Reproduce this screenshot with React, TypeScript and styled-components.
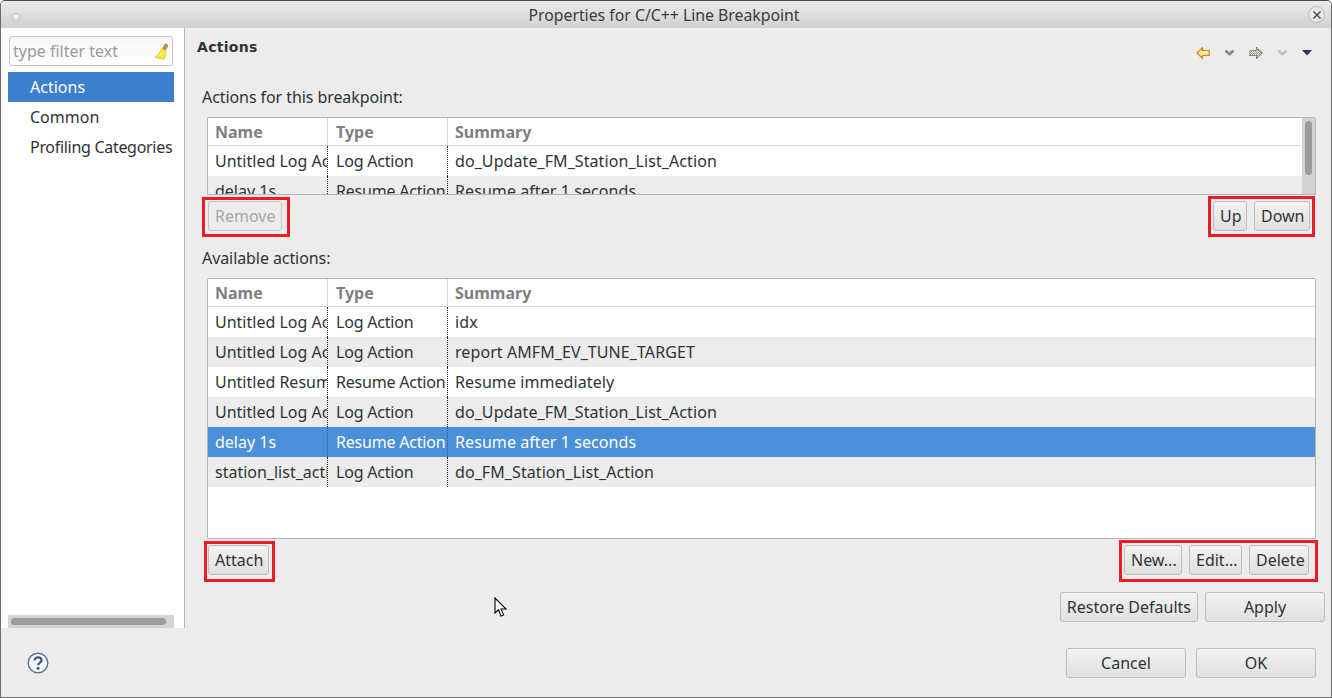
import { createGlobalStyle } from "styled-components";
import styled from "styled-components";

type Action = { name: string; type: string; summary: string; selected?: boolean };

const attached: Action[] = [
  { name: "Untitled Log Action", type: "Log Action", summary: "do_Update_FM_Station_List_Action" },
  { name: "delay 1s", type: "Resume Action", summary: "Resume after 1 seconds" },
];

const available: Action[] = [
  { name: "Untitled Log Action", type: "Log Action", summary: "idx" },
  { name: "Untitled Log Action", type: "Log Action", summary: "report AMFM_EV_TUNE_TARGET" },
  { name: "Untitled Resume Action", type: "Resume Action", summary: "Resume immediately" },
  { name: "Untitled Log Action", type: "Log Action", summary: "do_Update_FM_Station_List_Action" },
  { name: "delay 1s", type: "Resume Action", summary: "Resume after 1 seconds", selected: true },
  { name: "station_list_action", type: "Log Action", summary: "do_FM_Station_List_Action" },
];

function ActionTable({ rows, height, scroll }: { rows: Action[]; height: number; scroll?: boolean }) {
  return (
    <TableBox $height={height}>
      <TableMain>
        <HeadRow>
          <HeadCell $w={120}>Name</HeadCell>
          <HeadCell $w={120} $pad={8}>Type</HeadCell>
          <HeadCell>Summary</HeadCell>
        </HeadRow>
        {rows.map((r, i) => (
          <Row key={i} $odd={i % 2 === 1} $selected={r.selected}>
            <Cell $w={120} $dots={!r.selected}>{r.name}</Cell>
            <Cell $w={120} $pad={8} $dots={!r.selected} $spacing={-0.2}>{r.type}</Cell>
            <Cell $spacing={0.08}>{r.summary}</Cell>
          </Row>
        ))}
      </TableMain>
      {scroll && (
        <ScrollTrack>
          <ScrollThumb />
        </ScrollTrack>
      )}
    </TableBox>
  );
}

export default function App() {
  return (
    <>
      <GlobalStyle />
      <Window>
        <TitleBar>
          <WindowDot />
          <Title>Properties for C/C++ Line Breakpoint</Title>
          <CloseButton>
            <svg width="10" height="10" viewBox="0 0 10 10">
              <path d="M1.5 1.5L8.5 8.5M8.5 1.5L1.5 8.5" stroke="#444" strokeWidth="1.4" />
            </svg>
          </CloseButton>
        </TitleBar>

        <Body>
          <Sidebar>
            <FilterBox>
              <FilterInput>
                <span>type filter text</span>
                <svg width="15" height="17" viewBox="0 0 15 17">
                  <path d="M11.2 0.8L14 2.4L11.2 7.4L8.6 6Z" fill="#c29a4e" stroke="#8f6a24" strokeWidth="0.7" />
                  <path d="M7.6 5.2L11.8 7.6C12.4 10.6 11.6 13.8 10 16.4L8.4 15.6L7.4 16.4L5.8 15.2L4.8 15.8L3.4 14.6L1 14.4C4 12.2 6.2 9 7.6 5.2Z" fill="#f6e332" stroke="#d8c41e" strokeWidth="0.7" />
                  <path d="M8 8C7.4 10 6.4 12 5 13.6M10 8.8C9.8 10.8 9 12.8 8 14.4" fill="none" stroke="#fff59a" strokeWidth="0.8" />
                </svg>
              </FilterInput>
            </FilterBox>
            <NavList>
              <NavItem $active>Actions</NavItem>
              <NavItem>Common</NavItem>
              <NavItem $tight>Profiling Categories</NavItem>
            </NavList>
            <SideScroll>
              <SideThumb />
            </SideScroll>
          </Sidebar>

          <Content>
            <Header>
              <PageTitle>Actions</PageTitle>
              <NavIcons>
                <svg width="14" height="12" viewBox="0 0 14 12">
                  <defs>
                    <linearGradient id="backFill" x1="0" y1="0" x2="0" y2="1">
                      <stop offset="0" stopColor="#fff8d8" />
                      <stop offset="1" stopColor="#fbd86c" />
                    </linearGradient>
                  </defs>
                  <path d="M0.8 6L6.5 0.7V3.5H13.3V8.5H6.5V11.3Z" fill="url(#backFill)" stroke="#c98a12" strokeWidth="1.2" strokeLinejoin="round" />
                </svg>
                <ChevronIcon color="#8a8a8a" />
                <svg width="14" height="12" viewBox="0 0 14 12">
                  <defs>
                    <pattern id="hatch" width="2" height="2" patternUnits="userSpaceOnUse">
                      <rect width="2" height="2" fill="#f2f2f2" />
                      <rect width="1" height="1" fill="#8f8f8f" />
                      <rect x="1" y="1" width="1" height="1" fill="#8f8f8f" />
                    </pattern>
                  </defs>
                  <path d="M13.2 6L7.5 0.7V3.5H0.7V8.5H7.5V11.3Z" fill="url(#hatch)" stroke="#7f7358" strokeWidth="1.1" strokeDasharray="1.6 0.6" />
                </svg>
                <ChevronIcon color="#c2c2c2" />
                <svg width="10" height="6" viewBox="0 0 10 6">
                  <path d="M0 0H10L5 5.5Z" fill="#35305c" />
                </svg>
              </NavIcons>
            </Header>

            <Section $after={19}>
              <SectionLabel>Actions for this breakpoint:</SectionLabel>
              <ActionTable rows={attached} height={78} scroll />
              <ButtonRow>
                <Annotated $l={6} $r={8} $t={4} $b={6}>
                  <Button $width={74} disabled>Remove</Button>
                </Annotated>
                <Annotated $l={5} $r={5} $t={5} $b={6}>
                  <Button $width={34}>Up</Button>
                  <Button $width={56}>Down</Button>
                </Annotated>
              </ButtonRow>
            </Section>

            <Section $after={17}>
              <SectionLabel>Available actions:</SectionLabel>
              <ActionTable rows={available} height={261} />
              <ButtonRow>
                <Annotated $l={4} $r={6} $t={4} $b={7}>
                  <Button $width={61}>Attach</Button>
                </Annotated>
                <Annotated $l={5} $r={9} $t={5} $b={7} $inset={1}>
                  <Button $width={58}>New...</Button>
                  <Button $width={53}>Edit...</Button>
                  <Button $width={60}>Delete</Button>
                </Annotated>
              </ButtonRow>
            </Section>

            <RestoreRow>
              <Button>Restore Defaults</Button>
              <Button $width={120}>Apply</Button>
            </RestoreRow>

            <Cursor width="14" height="21" viewBox="0 0 14 21">
              <path d="M1 1V16L4.5 12.8L7 19L9.6 17.9L7 12H12Z" fill="#fff" stroke="#000" strokeWidth="1.1" />
            </Cursor>
          </Content>
        </Body>

        <Footer>
          <HelpIcon width="22" height="22" viewBox="0 0 22 22">
            <circle cx="11" cy="11" r="9.8" fill="#f6f7fa" stroke="#5d7191" strokeWidth="1.4" />
            <path d="M7.6 8.6C7.6 6.6 9.1 5.4 11 5.4C13 5.4 14.5 6.6 14.5 8.3C14.5 10.6 11.2 10.6 11.2 13.2" fill="none" stroke="#46597a" strokeWidth="2.3" />
            <circle cx="11.1" cy="16.2" r="1.5" fill="#46597a" />
          </HelpIcon>
          <FooterButtons>
            <Button $width={120}>Cancel</Button>
            <Button $width={120}>OK</Button>
          </FooterButtons>
        </Footer>
      </Window>
    </>
  );
}

function ChevronIcon({ color }: { color: string }) {
  return (
    <svg width="9" height="6" viewBox="0 0 9 6">
      <path d="M0 0.6L2 0L4.5 2.6L7 0L9 0.6V2L4.5 6L0 2Z" fill={color} />
    </svg>
  );
}

const GlobalStyle = createGlobalStyle`
  html, body {
    margin: 0;
    padding: 0;
    background: #fff;
  }
  * {
    box-sizing: border-box;
  }
`;

const Window = styled.div`
  width: 1332px;
  height: 698px;
  display: flex;
  flex-direction: column;
  background: #ececec;
  border: 1px solid #6b6b6b;
  border-top-color: #4a4a4a;
  border-radius: 5px 5px 0 0;
  overflow: hidden;
  font-family: "Noto Sans", "Open Sans", sans-serif;
  font-size: 16px;
  color: #2e3436;
`;

const TitleBar = styled.div`
  height: 27px;
  flex: none;
  display: flex;
  align-items: center;
  justify-content: space-between;
  padding: 0 6px 0 11px;
  background: linear-gradient(#ebebeb, #d0d0d0);
`;

const WindowDot = styled.div`
  width: 8px;
  height: 8px;
  margin-top: 4px;
  border-radius: 50%;
  background: #ececec;
  border: 1px solid #c4c4c4;
`;

const Title = styled.div`
  flex: 1;
  text-align: center;
  font-size: 15.8px;
  color: #3a3a3a;
`;

const CloseButton = styled.div`
  width: 17px;
  height: 17px;
  border-radius: 50%;
  display: flex;
  align-items: center;
  justify-content: center;
  background: #e6e6e6;
  border: 1px solid #bbb;
`;

const Body = styled.div`
  height: 600px;
  flex: none;
  display: flex;
`;

const Sidebar = styled.div`
  width: 183px;
  flex: none;
  display: flex;
  flex-direction: column;
  background: #fff;
  padding-left: 7px;
  padding-right: 11px;
`;

const FilterBox = styled.div`
  padding: 8px 0 6px;
`;

const FilterInput = styled.div`
  height: 30px;
  margin-left: 1px;
  display: flex;
  align-items: center;
  justify-content: space-between;
  padding: 0 3px 0 3px;
  border: 1px solid #c6c6c6;
  border-radius: 3px;
  background: linear-gradient(#f6f6f6, #ffffff);
  color: #9a9a9a;
`;

const NavList = styled.div`
  flex: 1;
  display: flex;
  flex-direction: column;
  margin-right: -1px;
`;

const NavItem = styled.div<{ $active?: boolean; $tight?: boolean }>`
  height: 30px;
  line-height: 30px;
  padding-left: 22px;
  white-space: nowrap;
  letter-spacing: ${(p) => (p.$tight ? "-0.3px" : "normal")};
  background: ${(p) => (p.$active ? "#3a80cd" : "transparent")};
  color: ${(p) => (p.$active ? "#fff" : "#2e3436")};
`;

const SideScroll = styled.div`
  height: 13px;
  margin-right: -1px;
  background: #d3d3d3;
  display: flex;
  align-items: center;
  padding: 0 3px;
`;

const SideThumb = styled.div`
  width: 155px;
  height: 7px;
  border-radius: 4px;
  background: #9c9c9c;
`;

const Content = styled.div`
  flex: 1;
  position: relative;
  display: flex;
  flex-direction: column;
  padding: 0 15px 0 17px;
  border-left: 1px solid #b8b8b8;
  background: #ececec;
`;

const Header = styled.div`
  height: 61px;
  display: flex;
  justify-content: space-between;
  align-items: flex-start;
  padding-top: 9px;
  margin-left: -5px;
`;

const PageTitle = styled.div`
  font-family: "DejaVu Sans", sans-serif;
  font-weight: 700;
  font-size: 14px;
  letter-spacing: 0.3px;
  line-height: 20px;
  color: #2e3436;
`;

const NavIcons = styled.div`
  display: flex;
  align-items: center;
  gap: 15px;
  height: 12px;
  margin-top: 10px;
  padding-right: 4px;
`;

const Section = styled.div<{ $after: number }>`
  display: flex;
  flex-direction: column;
  margin-bottom: ${(p) => p.$after}px;
`;

const SectionLabel = styled.div`
  height: 28px;
  line-height: 16px;
  letter-spacing: -0.08px;
  white-space: nowrap;
`;

const TableBox = styled.div<{ $height: number }>`
  height: ${(p) => p.$height}px;
  margin-left: 5px;
  display: flex;
  background: #fff;
  border: 1px solid #b4b4b4;
  border-radius: 2px 2px 0 0;
  overflow: hidden;
`;

const TableMain = styled.div`
  flex: 1;
  min-width: 0;
  display: flex;
  flex-direction: column;
`;

const HeadRow = styled.div`
  height: 28px;
  flex: none;
  display: flex;
  background: #fff;
  border-bottom: 1px solid #d6d6d6;
`;

const HeadCell = styled.div<{ $w?: number; $pad?: number }>`
  ${(p) => (p.$w ? `width: ${p.$w}px; flex: none; border-right: 1px solid #d6d6d6;` : "flex: 1;")}
  padding-left: ${(p) => p.$pad ?? 7}px;
  line-height: 28px;
  font-weight: 700;
  color: #7f7f7f;
  white-space: nowrap;
  overflow: hidden;
`;

const Row = styled.div<{ $odd?: boolean; $selected?: boolean }>`
  height: 30px;
  flex: none;
  display: flex;
  background: ${(p) => (p.$selected ? "#4a90d9" : p.$odd ? "#ececec" : "#fff")};
  color: ${(p) => (p.$selected ? "#fff" : "#2e3436")};
`;

const Cell = styled.div<{ $w?: number; $pad?: number; $dots?: boolean; $spacing?: number }>`
  ${(p) => (p.$w ? `width: ${p.$w}px; flex: none;` : "flex: 1;")}
  ${(p) => (p.$w ? `border-right: 1px dotted ${p.$dots ? "#222" : "#2a5d96"};` : "")}
  padding-left: ${(p) => p.$pad ?? 7}px;
  letter-spacing: ${(p) => p.$spacing ?? 0}px;
  line-height: 30px;
  white-space: nowrap;
  overflow: hidden;
`;

const ScrollTrack = styled.div`
  width: 13px;
  flex: none;
  padding: 3px;
  background: #d3d3d3;
`;

const ScrollThumb = styled.div`
  width: 7px;
  height: 54px;
  border-radius: 4px;
  background: #9c9c9c;
`;

const ButtonRow = styled.div`
  height: 36px;
  margin-left: 6px;
  margin-right: 6px;
  padding-top: 6px;
  display: flex;
  justify-content: space-between;
`;

const Annotated = styled.div<{ $l: number; $r: number; $t: number; $b: number; $inset?: number }>`
  position: relative;
  height: 30px;
  display: flex;
  gap: 7px;
  margin-right: ${(p) => p.$inset ?? 0}px;
  &::after {
    content: "";
    position: absolute;
    left: -${(p) => p.$l}px;
    right: -${(p) => p.$r}px;
    top: -${(p) => p.$t}px;
    bottom: -${(p) => p.$b}px;
    border: 3px solid #ed1c24;
    pointer-events: none;
  }
`;

const Button = styled.button<{ $width?: number }>`
  height: 30px;
  ${(p) => (p.$width ? `width: ${p.$width}px;` : "")}
  padding: 0 6px;
  font: inherit;
  color: #2e3436;
  background: linear-gradient(#f2f2f2, #e0e0e0);
  border: 1px solid #bdbdbd;
  border-radius: 3px;
  white-space: nowrap;
  &:disabled {
    color: #a8a8a8;
    background: #ececec;
    border-color: #c8c8c8;
  }
`;

const RestoreRow = styled.div`
  display: flex;
  justify-content: flex-end;
  gap: 7px;
  margin-right: -9px;
`;

const Cursor = styled.svg`
  position: absolute;
  left: 309px;
  top: 569px;
`;

const Footer = styled.div`
  flex: 1;
  display: flex;
  align-items: center;
  justify-content: space-between;
  padding: 0 15px 0 26px;
  background: #ececec;
`;

const HelpIcon = styled.svg`
  flex: none;
`;

const FooterButtons = styled.div`
  display: flex;
  gap: 10px;
`;
